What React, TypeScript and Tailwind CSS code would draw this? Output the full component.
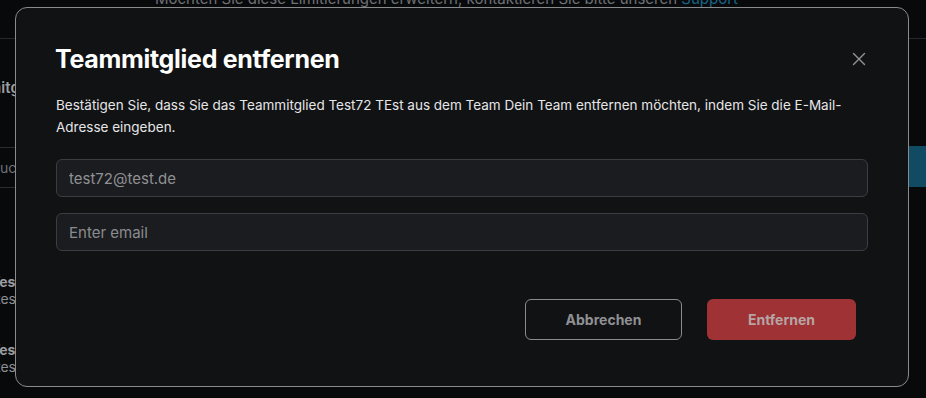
import React from "react";
import { X } from "lucide-react";

const font = { fontFamily: "Inter, 'Noto Sans', sans-serif" };

const Background: React.FC = () => (
  <div className="flex flex-col w-full h-full text-[#8d8f93]">
    <div className="h-[39px] border-b border-[#25272b] overflow-hidden">
      <p className="-mt-[11px] pl-[155px] text-[15px] leading-[20px] text-[#6f7276] whitespace-nowrap">
        Möchten Sie diese Limitierungen erweitern, kontaktieren Sie bitte unseren{" "}
        <span className="text-[#1a6486]">Support</span>
      </p>
    </div>
    <div className="flex flex-1">
      <div className="w-[120px] -ml-[60px] flex flex-col whitespace-nowrap">
        <p className="mt-[38px] pl-[8px] text-[15px] font-semibold text-[#9b9da1]">Teammitglieder</p>
        <div className="mt-[47px] h-[41px] border-y border-[#2a2c30] flex items-center pl-[51px]">
          <span className="text-[14px] text-[#6f7276]">Suchen</span>
        </div>
        <div className="mt-[85px] flex flex-col text-[14px] leading-[17px]">
          <p className="pl-[51px] font-bold text-[#9b9da1]">Test72 TEst</p>
          <p className="pl-[56px] text-[#8d8f93]">test72@test.de</p>
          <p className="mt-[34px] pl-[51px] font-bold text-[#9b9da1]">Test73 TEst</p>
          <p className="pl-[56px] text-[#8d8f93]">test73@test.de</p>
        </div>
      </div>
      <div className="flex-1" />
      <div className="w-[17px] flex flex-col">
        <div className="mt-[107px] h-[41px] bg-[#114a63]" />
      </div>
    </div>
  </div>
);

const App: React.FC = () => {
  return (
    <div className="relative w-[926px] h-[398px] overflow-hidden bg-[#08090b]" style={font}>
      <Background />
      <div className="absolute left-[15px] top-[7px] w-[894px] h-[380px] rounded-[12px] border border-[#8a8b8d] bg-[#111214] flex flex-col pl-[40px] pr-[40px]">
        <div className="flex items-center justify-between pt-[36px]">
          <h2 className="text-[25px] leading-[30px] font-bold text-white tracking-[-0.3px] -ml-[1px]">Teammitglied entfernen</h2>
          <button className="text-[#8e9093] -mr-[2px]">
            <X className="w-[22px] h-[22px]" strokeWidth={1.5} />
          </button>
        </div>
        <p className="mt-[20px] text-[13.5px] leading-[22px] text-[#e6e6e7]">
          Bestätigen Sie, dass Sie das Teammitglied Test72 TEst aus dem Team Dein Team entfernen möchten, indem Sie die E-Mail-Adresse eingeben.
        </p>
        <div className="mt-[21px] flex flex-col gap-[16px]">
          <input
            disabled
            value="test72@test.de"
            className="h-[38px] w-full rounded-[6px] border border-[#3a3d42] bg-[#1b1c1f] px-[12px] text-[15px] text-[#8f9194]"
          />
          <input
            placeholder="Enter email"
            className="h-[38px] w-full rounded-[6px] border border-[#3a3d42] bg-[#1b1c1f] px-[12px] text-[15px] text-[#8f9194] placeholder:text-[#8a8c8f] outline-none"
          />
        </div>
        <div className="mt-[48px] flex justify-end gap-[25px] pr-[12px]">
          <button className="w-[157px] h-[41px] rounded-[6px] border border-[#8a8b8d] text-[14px] font-bold text-[#8f9093]">
            Abbrechen
          </button>
          <button className="w-[149px] h-[41px] rounded-[6px] bg-[#9e3234] text-[14px] font-bold text-[#b7a5a5]">
            Entfernen
          </button>
        </div>
      </div>
    </div>
  );
};

export default App;
